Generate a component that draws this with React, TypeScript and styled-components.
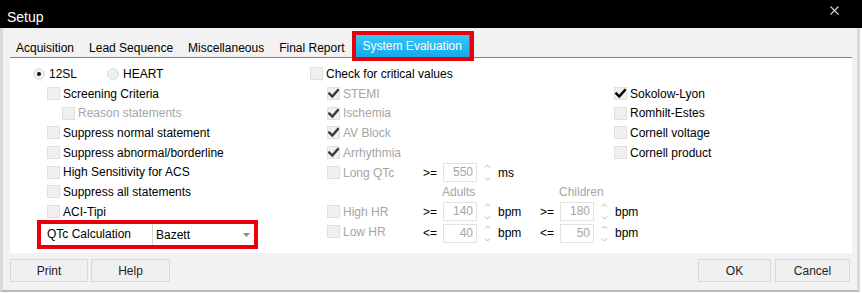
import React from 'react';
import styled, { createGlobalStyle } from 'styled-components';

const GlobalStyle = createGlobalStyle`
  html, body {
    margin: 0;
    padding: 0;
    background: #f2f2f2;
  }

  body {
    font-family: "Liberation Sans", Arial, sans-serif;
    font-size: 12px;
    color: #000;
  }
`;

const ROW = 19.7;

function CheckMark({ color }: { color: string }) {
  return (
    <svg width="11" height="11" viewBox="0 0 11 11">
      <path
        d="M1.3 5.6 L4.3 8.5 L9.8 2.2"
        fill="none"
        stroke={color}
        strokeWidth="2.5"
        strokeLinecap="square"
      />
    </svg>
  );
}

function Check({
  label,
  checked = false,
  disabled = false,
}: {
  label?: string;
  checked?: boolean;
  disabled?: boolean;
}) {
  return (
    <CheckItem $disabled={disabled}>
      <Box>{checked ? <CheckMark color={disabled ? '#3c3c3c' : '#000'} /> : null}</Box>
      {label ? <span>{label}</span> : null}
    </CheckItem>
  );
}

function SpinArrows() {
  return (
    <Arrows width="7" height="19" viewBox="0 0 7 19">
      <path d="M1 4.5 L3.5 2 L6 4.5" fill="none" stroke="#b4b4b4" strokeWidth="1" />
      <path d="M1 14.5 L3.5 17 L6 14.5" fill="none" stroke="#b4b4b4" strokeWidth="1" />
    </Arrows>
  );
}

function Spin({ op, value, unit }: { op: string; value: string; unit: string }) {
  return (
    <SpinGroup>
      <Op>{op}</Op>
      <SpinBox>{value}</SpinBox>
      <SpinArrows />
      <Unit>{unit}</Unit>
    </SpinGroup>
  );
}

export default function App() {
  return (
    <>
      <GlobalStyle />
      <Window>
        <TitleBar>
          <span>Setup</span>
          <svg width="9" height="9" viewBox="0 0 9 9" className="close">
            <path d="M0.5 0.5 L8.5 8.5 M8.5 0.5 L0.5 8.5" stroke="#d8d8d8" strokeWidth="1.1" />
          </svg>
        </TitleBar>
        <Frame>
          <TabStrip>
            <Tab>Acquisition</Tab>
            <Tab>Lead Sequence</Tab>
            <Tab>Miscellaneous</Tab>
            <Tab>Final Report</Tab>
            <Marked>
              <ActiveTab>System Evaluation</ActiveTab>
            </Marked>
          </TabStrip>

          <Panel>
            <Column $pad={23}>
              <Row>
                <RadioItem $width={74}>
                  <Radio $on />
                  <span>12SL</span>
                </RadioItem>
                <RadioItem>
                  <Radio />
                  <span>HEART</span>
                </RadioItem>
              </Row>
              <Row $indent={14}>
                <Check label="Screening Criteria" />
              </Row>
              <Row $indent={29}>
                <Check label="Reason statements" disabled />
              </Row>
              <Row $indent={14}>
                <Check label="Suppress normal statement" />
              </Row>
              <Row $indent={14}>
                <Check label="Suppress abnormal/borderline" />
              </Row>
              <Row $indent={14}>
                <Check label="High Sensitivity for ACS" />
              </Row>
              <Row $indent={14}>
                <Check label="Suppress all statements" />
              </Row>
              <Row $indent={14}>
                <Check label="ACI-Tipi" />
              </Row>
              <QtcBox>
                <QtcLabel>QTc Calculation</QtcLabel>
                <Dropdown>
                  <span>Bazett</span>
                  <svg width="7" height="4" viewBox="0 0 7 4">
                    <path d="M0 0 L7 0 L3.5 4 Z" fill="#8a8a8a" />
                  </svg>
                </Dropdown>
              </QtcBox>
            </Column>

            <Column>
              <Row>
                <Check label="Check for critical values" />
              </Row>
              <Row $indent={17}>
                <Check label="STEMI" checked disabled />
              </Row>
              <Row $indent={17}>
                <Check label="Ischemia" checked disabled />
              </Row>
              <Row $indent={17}>
                <Check label="AV Block" checked disabled />
              </Row>
              <Row $indent={17}>
                <Check label="Arrhythmia" checked disabled />
              </Row>
              <SpinRow $h={21}>
                <LabelCell>
                  <Check label="Long QTc" disabled />
                </LabelCell>
                <Spin op=">=" value="550" unit="ms" />
              </SpinRow>
              <SpinRow $h={18}>
                <LabelCell />
                <SpinGroup>
                  <Op />
                  <Caption>Adults</Caption>
                </SpinGroup>
                <SpinGroup>
                  <Op />
                  <Caption>Children</Caption>
                </SpinGroup>
              </SpinRow>
              <SpinRow $h={21}>
                <LabelCell>
                  <Check label="High HR" disabled />
                </LabelCell>
                <Spin op=">=" value="140" unit="bpm" />
                <Spin op=">=" value="180" unit="bpm" />
              </SpinRow>
              <SpinRow $h={22}>
                <LabelCell $lift>
                  <Check label="Low HR" disabled />
                </LabelCell>
                <Spin op="<=" value="40" unit="bpm" />
                <Spin op="<=" value="50" unit="bpm" />
              </SpinRow>
            </Column>

            <Column $top={ROW}>
              <Row>
                <Check label="Sokolow-Lyon" checked />
              </Row>
              <Row>
                <Check label="Romhilt-Estes" />
              </Row>
              <Row>
                <Check label="Cornell voltage" />
              </Row>
              <Row>
                <Check label="Cornell product" />
              </Row>
            </Column>
          </Panel>

          <Footer>
            <ButtonGroup $gap={3}>
              <Button $width={78}>Print</Button>
              <Button $width={79}>Help</Button>
            </ButtonGroup>
            <ButtonGroup $gap={4}>
              <Button $width={73}>OK</Button>
              <Button $width={75}>Cancel</Button>
            </ButtonGroup>
          </Footer>
        </Frame>
      </Window>
    </>
  );
}

const Window = styled.div`
  width: 862px;
  height: 293px;
  display: flex;
  flex-direction: column;
  background: #fff;
  overflow: hidden;
`;

const TitleBar = styled.div`
  flex: 0 0 28px;
  box-sizing: border-box;
  padding: 5px 23px 0 7px;
  display: flex;
  align-items: center;
  justify-content: space-between;
  background: #000;
  color: #fff;
  font-size: 14px;

  .close {
    align-self: flex-start;
    margin-top: 1px;
  }
`;

const Frame = styled.div`
  flex: 0 0 auto;
  height: 262px;
  margin-right: 2px;
  padding: 0 5px 0 7px;
  display: flex;
  flex-direction: column;
  background: #f2f2f2;
  border-left: 3px solid #d9d9d9;
  border-right: 3px solid #d9d9d9;
  border-bottom: 2px solid #b9b9b9;
`;

const TabStrip = styled.div`
  margin-top: 3px;
  height: 26px;
  display: flex;
  align-items: flex-end;
  gap: 3px;
  border-bottom: 1px solid #2aa2de;
`;

const Tab = styled.div`
  height: 22px;
  box-sizing: border-box;
  padding: 4px 6px 0;
  line-height: 18px;
  color: #000;
  white-space: nowrap;
`;

const Marked = styled.div`
  position: relative;
  z-index: 1;
  margin-left: -2px;
  margin-bottom: -4px;
  border: 4px solid #e8000b;
`;

const ActiveTab = styled.div`
  height: 22px;
  padding: 0 8px 0 7px;
  line-height: 22px;
  color: #fff;
  white-space: nowrap;
  background: linear-gradient(#3cc4f6, #13abeb);
  box-shadow: inset -1px 0 0 #0f8ec8;
`;

const Panel = styled.div`
  flex: 0 0 195px;
  box-sizing: border-box;
  padding-top: 6px;
  display: grid;
  grid-template-columns: 300px 304px 1fr;
  background: #fff;
`;

const Column = styled.div<{ $pad?: number; $top?: number }>`
  min-width: 0;
  padding-left: ${p => p.$pad ?? 0}px;
  padding-top: ${p => p.$top ?? 0}px;
  display: flex;
  flex-direction: column;
`;

const Row = styled.div<{ $indent?: number }>`
  height: ${ROW}px;
  padding-left: ${p => p.$indent ?? 0}px;
  display: flex;
  align-items: center;
`;

const RadioItem = styled.div<{ $width?: number }>`
  width: ${p => (p.$width ? `${p.$width}px` : 'auto')};
  display: flex;
  align-items: center;
  gap: 4px;
`;

const Radio = styled.span<{ $on?: boolean }>`
  width: 12px;
  height: 12px;
  box-sizing: border-box;
  border-radius: 50%;
  border: 1px solid #dedede;
  background: #efefef;
  display: flex;
  align-items: center;
  justify-content: center;

  &::after {
    content: '';
    display: ${p => (p.$on ? 'block' : 'none')};
    width: 4px;
    height: 4px;
    border-radius: 50%;
    background: #111;
  }
`;

const CheckItem = styled.div<{ $disabled?: boolean }>`
  display: flex;
  align-items: center;
  gap: 3px;
  white-space: nowrap;
  color: ${p => (p.$disabled ? '#a6a6a6' : '#000')};
`;

const Box = styled.span`
  flex: 0 0 auto;
  width: 13px;
  height: 13px;
  box-sizing: border-box;
  border: 1px solid #e0e0e0;
  background: #f0f0f0;
  display: flex;
  align-items: center;
  justify-content: center;
`;

const QtcBox = styled.div`
  margin: -2px 0 0 4px;
  width: 221px;
  height: 29px;
  box-sizing: border-box;
  display: flex;
  border: 4px solid #e8000b;
`;

const QtcLabel = styled.div`
  width: 111px;
  padding-left: 6px;
  box-sizing: border-box;
  display: flex;
  align-items: center;
`;

const Dropdown = styled.div`
  flex: 1;
  padding: 1px 4px 0 3px;
  display: flex;
  align-items: center;
  justify-content: space-between;
  border-left: 1px solid #d6d6d6;
  background: #fff;
`;

const SpinRow = styled.div<{ $h: number }>`
  height: ${p => p.$h}px;
  display: flex;
  align-items: center;
`;

const LabelCell = styled.div<{ $lift?: boolean }>`
  flex: 0 0 113px;
  box-sizing: border-box;
  padding-left: 17px;
  margin-top: ${p => (p.$lift ? '-3px' : '0')};
`;

const SpinGroup = styled.div`
  flex: 0 0 117px;
  display: flex;
  align-items: center;
`;

const Op = styled.span`
  flex: 0 0 20px;
`;

const SpinBox = styled.div`
  flex: 0 0 34px;
  height: 19px;
  box-sizing: border-box;
  padding-right: 3px;
  border: 1px solid #e2e2e2;
  text-align: right;
  line-height: 17px;
  color: #a6a6a6;
`;

const Arrows = styled.svg`
  flex: 0 0 auto;
  margin: 0 7px 0 7px;
`;

const Unit = styled.span`
  color: #000;
`;

const Caption = styled.span`
  margin-left: -1px;
  color: #a6a6a6;
`;

const Footer = styled.div`
  padding: 6px 2px 0 0;
  display: flex;
  justify-content: space-between;
`;

const ButtonGroup = styled.div<{ $gap: number }>`
  display: flex;
  gap: ${p => p.$gap}px;
`;

const Button = styled.button<{ $width: number }>`
  width: ${p => p.$width}px;
  height: 23px;
  padding: 0;
  background: #f0f0f0;
  border: 1px solid #d9d9d9;
  border-radius: 0;
  font-family: "Liberation Sans", Arial, sans-serif;
  font-size: 12px;
  color: #222;
`;
